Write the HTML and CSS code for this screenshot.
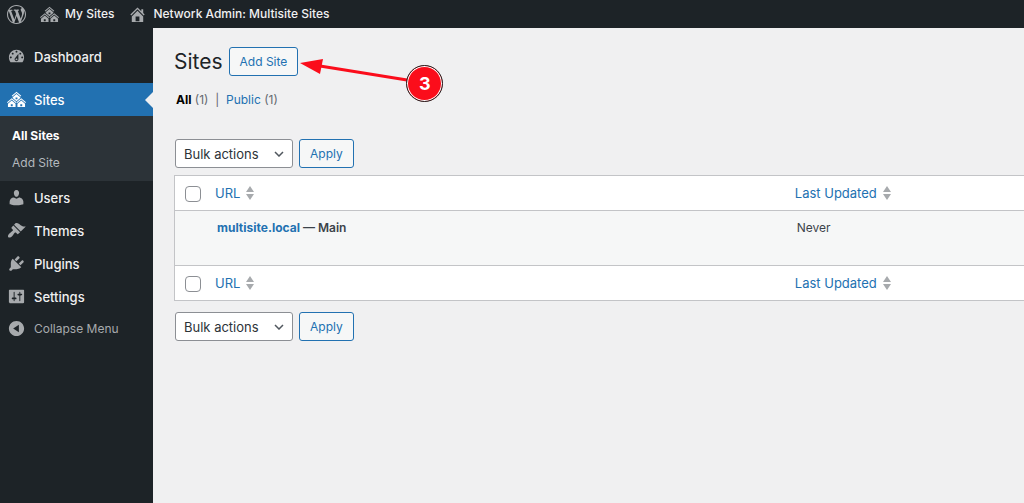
FILE: index.html
```
<!DOCTYPE html>
<html lang="en">
<head>
    <title>Sites - Network Admin</title>
    <meta charset="UTF-8">
    <meta name="viewport" content="width=device-width, initial-scale=1">
    <link rel="stylesheet" href="styles.css">
</head>
<body>

    <!-- Shared icons -->
    <svg class="defs" aria-hidden="true">
        <symbol id="multisite" viewBox="0 0 20 20">
            <path d="M14.27 6.87L10 3.14 5.73 6.87 5 6.14l5-4.38 5 4.38zM14 8.42l-4.05 3.43L6 8.38v-.74l4-3.5 4 3.5v.78zM11 9.7V8H9v1.7h2zm-1.73 4.03L5 10 .73 13.73 0 13l5-4.38L10 13zm10 0L15 10l-4.27 3.73L10 13l5-4.38L20 13zM5 11l4 3.5V18H1v-3.5zm10 0l4 3.5V18h-8v-3.5zm-9 6v-2H4v2h2zm10 0v-2h-2v2h2z"/>
        </symbol>
        <symbol id="sort" viewBox="0 0 8 14">
            <path d="M4 0l4 6H0zM4 14l4-6H0z"/>
        </symbol>
    </svg>

    <!-- Admin bar -->
    <header class="adminbar">
        <a href="#" aria-label="About WordPress">
            <svg class="icon" viewBox="0 0 20 20"><path d="M20 10c0-5.51-4.49-10-10-10C4.48 0 0 4.49 0 10c0 5.52 4.48 10 10 10 5.51 0 10-4.48 10-10zM7.78 15.37L4.37 6.22c.55-.02 1.17-.08 1.17-.08.5-.06.44-1.13-.06-1.11 0 0-1.45.11-2.37.11-.18 0-.37 0-.58-.01C4.12 2.69 6.87 1.11 10 1.11c2.33 0 4.45.87 6.05 2.34-.68-.11-1.65.39-1.65 1.58 0 .74.45 1.36.9 2.1.35.61.55 1.36.55 2.46 0 1.49-1.4 5-1.4 5l-3.03-8.37c.54-.02.82-.17.82-.17.5-.05.44-1.25-.06-1.22 0 0-1.44.12-2.38.12-.87 0-2.33-.12-2.33-.12-.5-.03-.56 1.2-.06 1.22l.92.08 1.26 3.41zM17.41 10c.24-.64.74-1.87.43-4.25.7 1.29 1.05 2.71 1.05 4.25 0 3.29-1.73 6.24-4.4 7.78.97-2.59 1.94-5.2 2.92-7.78zM6.1 18.09C3.12 16.65 1.11 13.53 1.11 10c0-1.3.23-2.48.72-3.59C3.25 10.3 4.67 14.2 6.1 18.09zm4.03-6.63l2.58 6.98c-.86.29-1.76.45-2.71.45-.79 0-1.57-.11-2.29-.33.81-2.38 1.62-4.74 2.42-7.1z"/></svg>
        </a>
        <a href="#"><svg class="icon"><use href="#multisite"/></svg>My Sites</a>
        <a href="#">
            <svg class="icon" viewBox="0 0 20 20"><path d="M16 8.5l1.53 1.53-1.06 1.06L10 4.6l-6.47 6.49-1.06-1.06L10 2.5l4 4v-2h2v4zm-6-2.46l6 5.99V18H4v-5.97zM12 17v-5H8v5h4z"/></svg>
            Network Admin: Multisite Sites
        </a>
    </header>

    <div class="layout">
        <!-- Side menu -->
        <nav class="sidebar">
            <a class="item first" href="#">
                <svg class="icon" viewBox="0 0 20 20"><path fill-rule="evenodd" d="M3.76 16h12.48c1.1-1.37 1.76-3.11 1.76-5 0-4.42-3.58-8-8-8s-8 3.58-8 8c0 1.89.66 3.63 1.76 5zM10 4c.55 0 1 .45 1 1s-.45 1-1 1-1-.45-1-1 .45-1 1-1zM6 6c.55 0 1 .45 1 1s-.45 1-1 1-1-.45-1-1 .45-1 1-1zm8 0c.55 0 1 .45 1 1s-.45 1-1 1-1-.45-1-1 .45-1 1-1zm-5.37 5.55L12 7v6c0 1.1-.9 2-2 2s-2-.9-2-2c0-.57.24-1.08.63-1.45zM4 10c.55 0 1 .45 1 1s-.45 1-1 1-1-.45-1-1 .45-1 1-1zm12 0c.55 0 1 .45 1 1s-.45 1-1 1-1-.45-1-1 .45-1 1-1zm-5 3c0-.55-.45-1-1-1s-1 .45-1 1 .45 1 1 1 1-.45 1-1z"/></svg>
                Dashboard
            </a>
            <a class="item current" href="#"><svg class="icon"><use href="#multisite"/></svg>Sites</a>
            <div class="submenu">
                <a class="active" href="#">All Sites</a>
                <a href="#">Add Site</a>
            </div>
            <a class="item" href="#">
                <svg class="icon" viewBox="0 0 20 20"><path d="M10 9.25c-2.27 0-2.73-3.44-2.73-3.44C7 4.02 7.82 2 9.97 2c2.16 0 2.98 2.02 2.71 3.81 0 0-.41 3.44-2.68 3.44zM7.23 10L10 11.2 12.72 10c2.39 0 4.52 2.33 4.52 4.53v2.49s-3.65 1.13-7.24 1.13c-3.65 0-7.24-1.13-7.24-1.13v-2.49c0-2.25 1.94-4.53 4.47-4.53z"/></svg>
                Users
            </a>
            <a class="item" href="#">
                <svg class="icon" viewBox="0 0 20 20"><path d="M14.48 11.06L7.41 3.99l1.5-1.5c.5-.56 2.3-.47 3.51.32 1.21.8 1.43 1.28 2.91 2.1 1.18.64 2.45 1.26 4.45.85zm-.71.71L6.7 4.7 4.93 6.47c-.39.39-.39 1.02 0 1.41l1.06 1.06c.39.39.39 1.03 0 1.42-.6.6-1.43 1.11-2.21 1.69-.35.26-.7.53-1.01.84C1.43 14.23.4 16.08 1.4 17.07c.99 1 2.84-.03 4.18-1.36.31-.31.58-.66.85-1.02.57-.78 1.08-1.61 1.69-2.21.39-.39 1.02-.39 1.41 0l1.06 1.06c.39.39 1.02.39 1.41 0z"/></svg>
                Themes
            </a>
            <a class="item" href="#">
                <svg class="icon" viewBox="0 0 20 20"><path d="M13.11 4.36L9.87 7.6 8 5.73l3.24-3.24c.35-.34 1.05-.2 1.56.32.52.51.66 1.21.31 1.55zm-8 1.77l.91-1.12 9.01 9.01-1.19.84c-.71.71-2.63 1.16-3.82 1.16H6.14L4.9 17.26c-.59.59-1.54.59-2.12 0-.59-.58-.59-1.53 0-2.12l1.24-1.24v-3.88c0-1.13.4-3.19 1.09-3.89zm7.26 3.97l3.24-3.24c.34-.35 1.04-.21 1.55.31.52.51.66 1.21.31 1.55l-3.24 3.25z"/></svg>
                Plugins
            </a>
            <a class="item" href="#">
                <svg class="icon" viewBox="0 0 20 20"><path d="M18 16V4c0-.55-.45-1-1-1H3c-.55 0-1 .45-1 1v12c0 .55.45 1 1 1h14c.55 0 1-.45 1-1zM8 11h1c.55 0 1 .45 1 1s-.45 1-1 1H8v1.5c0 .28-.22.5-.5.5s-.5-.22-.5-.5V13H6c-.55 0-1-.45-1-1s.45-1 1-1h1V5.5c0-.28.22-.5.5-.5s.5.22.5.5V11zm5-2h-1c-.55 0-1-.45-1-1s.45-1 1-1h1V5.5c0-.28.22-.5.5-.5s.5.22.5.5V7h1c.55 0 1 .45 1 1s-.45 1-1 1h-1v5.5c0 .28-.22.5-.5.5s-.5-.22-.5-.5V9z"/></svg>
                Settings
            </a>
            <button type="button" class="item collapse">
                <svg class="icon" viewBox="0 0 20 20"><path fill-rule="evenodd" d="M10 2c4.42 0 8 3.58 8 8s-3.58 8-8 8-8-3.58-8-8 3.58-8 8-8zm2.5 12V6l-6 4z"/></svg>
                Collapse Menu
            </button>
        </nav>

        <!-- Sites list -->
        <main class="content">
            <div class="heading">
                <h1>Sites</h1>
                <button type="button" class="btn">Add Site</button>
                <div class="callout">
                    <svg class="arrow" viewBox="0 0 110 24" aria-hidden="true">
                        <path d="M20 8L107 22" stroke="#fb0d1b" stroke-width="3"/>
                        <path d="M0 5L23 1L20 16z" fill="#fb0d1b"/>
                    </svg>
                    <span class="step">3</span>
                </div>
            </div>

            <div class="filters">
                <a class="active" href="#">All</a> (1) &nbsp;|&nbsp; <a href="#">Public</a> (1)
            </div>

            <div class="bulk">
                <select aria-label="Select bulk action">
                    <option>Bulk actions</option>
                    <option>Delete</option>
                </select>
                <button type="button" class="btn">Apply</button>
            </div>

            <table>
                <thead>
                    <tr>
                        <th class="check"><input type="checkbox" aria-label="Select all"></th>
                        <th><a href="#">URL<svg class="sort"><use href="#sort"/></svg></a></th>
                        <th class="updated"><a href="#">Last Updated<svg class="sort"><use href="#sort"/></svg></a></th>
                    </tr>
                </thead>
                <tbody>
                    <tr>
                        <td></td>
                        <td class="site"><a href="#">multisite.local</a> — Main</td>
                        <td>Never</td>
                    </tr>
                </tbody>
                <tfoot>
                    <tr>
                        <th class="check"><input type="checkbox" aria-label="Select all"></th>
                        <th><a href="#">URL<svg class="sort"><use href="#sort"/></svg></a></th>
                        <th class="updated"><a href="#">Last Updated<svg class="sort"><use href="#sort"/></svg></a></th>
                    </tr>
                </tfoot>
            </table>

            <div class="bulk">
                <select aria-label="Select bulk action">
                    <option>Bulk actions</option>
                    <option>Delete</option>
                </select>
                <button type="button" class="btn">Apply</button>
            </div>
        </main>
    </div>

</body>
</html>
```
FILE: styles.css
```
* {
    box-sizing: border-box;
}

body {
    margin: 0;
    min-height: 100vh;
    display: flex;
    flex-direction: column;
    background-color: #f0f0f1;
    color: #3c434a;
    font-family: Inter, sans-serif;
    font-size: 12px;
    line-height: 20px;
}

a {
    color: #2271b1;
    text-decoration: none;
}

button,
select {
    font-family: inherit;
    font-size: 12px;
}

.defs {
    display: none;
}

.icon {
    width: 19px;
    height: 19px;
    flex: none;
    fill: #a7aaad;
}

/* Admin bar */
.adminbar {
    display: flex;
    gap: 14px;
    height: 28px;
    padding-left: 7px;
    background-color: #1d2327;
}

.adminbar a {
    display: flex;
    align-items: center;
    gap: 6px;
    color: #f0f0f1;
    font-weight: 500;
}

.layout {
    display: flex;
    flex: 1;
}

/* Side menu */
.sidebar {
    width: 153px;
    flex: none;
    padding-top: 12px;
    background-color: #1d2327;
}

.item {
    display: flex;
    align-items: center;
    gap: 8px;
    width: 100%;
    height: 33px;
    padding: 0 7px;
    color: #f0f0f1;
    font-size: 13px;
    font-weight: 500;
}

.item.first {
    margin-bottom: 10px;
}

.item.current {
    position: relative;
    background-color: #2271b1;
    color: #fff;
}

.item.current .icon {
    fill: #fff;
}

.item.current::after {
    content: "";
    position: absolute;
    top: 9px;
    right: 0;
    border: 8px solid transparent;
    border-left: 0;
    border-right-color: #f0f0f1;
}

.submenu {
    padding: 6px 0 5px;
    background-color: #2c3338;
}

.submenu a {
    display: block;
    padding: 0 12px;
    color: #b4b9be;
    line-height: 27px;
}

.submenu a.active {
    color: #fff;
    font-weight: 700;
}

.collapse {
    height: 30px;
    border: none;
    background: none;
    color: #a7aaad;
    font-size: 12px;
    font-weight: 400;
    cursor: pointer;
}

/* Sites list */
.content {
    flex: 1;
    min-width: 0;
    padding: 19px 0 0 21px;
}

.heading {
    display: flex;
    align-items: center;
    gap: 6px;
}

h1 {
    margin: 0;
    color: #1d2327;
    font-size: 21px;
    font-weight: 400;
    line-height: 28px;
}

.btn {
    height: 29px;
    padding: 0 10px;
    border: 1px solid #2271b1;
    border-radius: 3px;
    background-color: #f6f7f7;
    color: #2271b1;
    cursor: pointer;
}

.callout {
    position: relative;
}

.arrow {
    position: absolute;
    top: -4px;
    left: -4px;
    width: 110px;
    height: 24px;
}

.step {
    position: absolute;
    top: 3px;
    left: 102px;
    width: 37px;
    height: 37px;
    border: 1px solid #222;
    border-radius: 50%;
    background-color: #fb0d1b;
    box-shadow: inset 0 0 0 1px #fff;
    color: #fff;
    font-size: 18px;
    font-weight: 700;
    line-height: 35px;
    text-align: center;
}

.filters {
    margin: 14px 0 29px;
    padding-left: 2px;
    color: #646970;
}

.filters .active {
    color: #000;
    font-weight: 700;
}

.bulk {
    display: flex;
    gap: 6px;
    padding-left: 1px;
}

select {
    width: 118px;
    height: 29px;
    padding: 0 8px;
    border: 1px solid #8c8f94;
    border-radius: 3px;
    appearance: none;
    background: #fff url("data:image/svg+xml,%3Csvg xmlns='http://www.w3.org/2000/svg' viewBox='0 0 10 6'%3E%3Cpath d='M1 1l4 4 4-4' fill='none' stroke='%2350575e' stroke-width='1.5'/%3E%3C/svg%3E") no-repeat right 8px center / 10px 6px;
    color: #2c3338;
    font-size: 13px;
}

table {
    width: 100%;
    margin: 7px 0 11px;
    border: 1px solid #c3c4c7;
    border-right: none;
    border-spacing: 0;
    background-color: #fff;
    table-layout: fixed;
}

th,
td {
    padding: 0;
    text-align: left;
    font-weight: 400;
}

th {
    height: 34px;
    font-size: 13px;
}

th a {
    display: flex;
    align-items: center;
    gap: 6px;
}

.check {
    width: 40px;
    padding-left: 10px;
}

.updated {
    width: 27%;
}

.sort {
    width: 8px;
    height: 14px;
    fill: #a7aaad;
}

input[type="checkbox"] {
    display: block;
    width: 16px;
    height: 16px;
    margin: 2px 0 0;
    border: 1px solid #8c8f94;
    border-radius: 4px;
    appearance: none;
    background-color: #fff;
}

td {
    height: 56px;
    padding: 7px 2px;
    border: 1px solid #c3c4c7;
    border-width: 1px 0;
    background-color: #f6f7f7;
    vertical-align: top;
}

.site {
    font-weight: 600;
}

.site a {
    font-weight: 700;
}
```
